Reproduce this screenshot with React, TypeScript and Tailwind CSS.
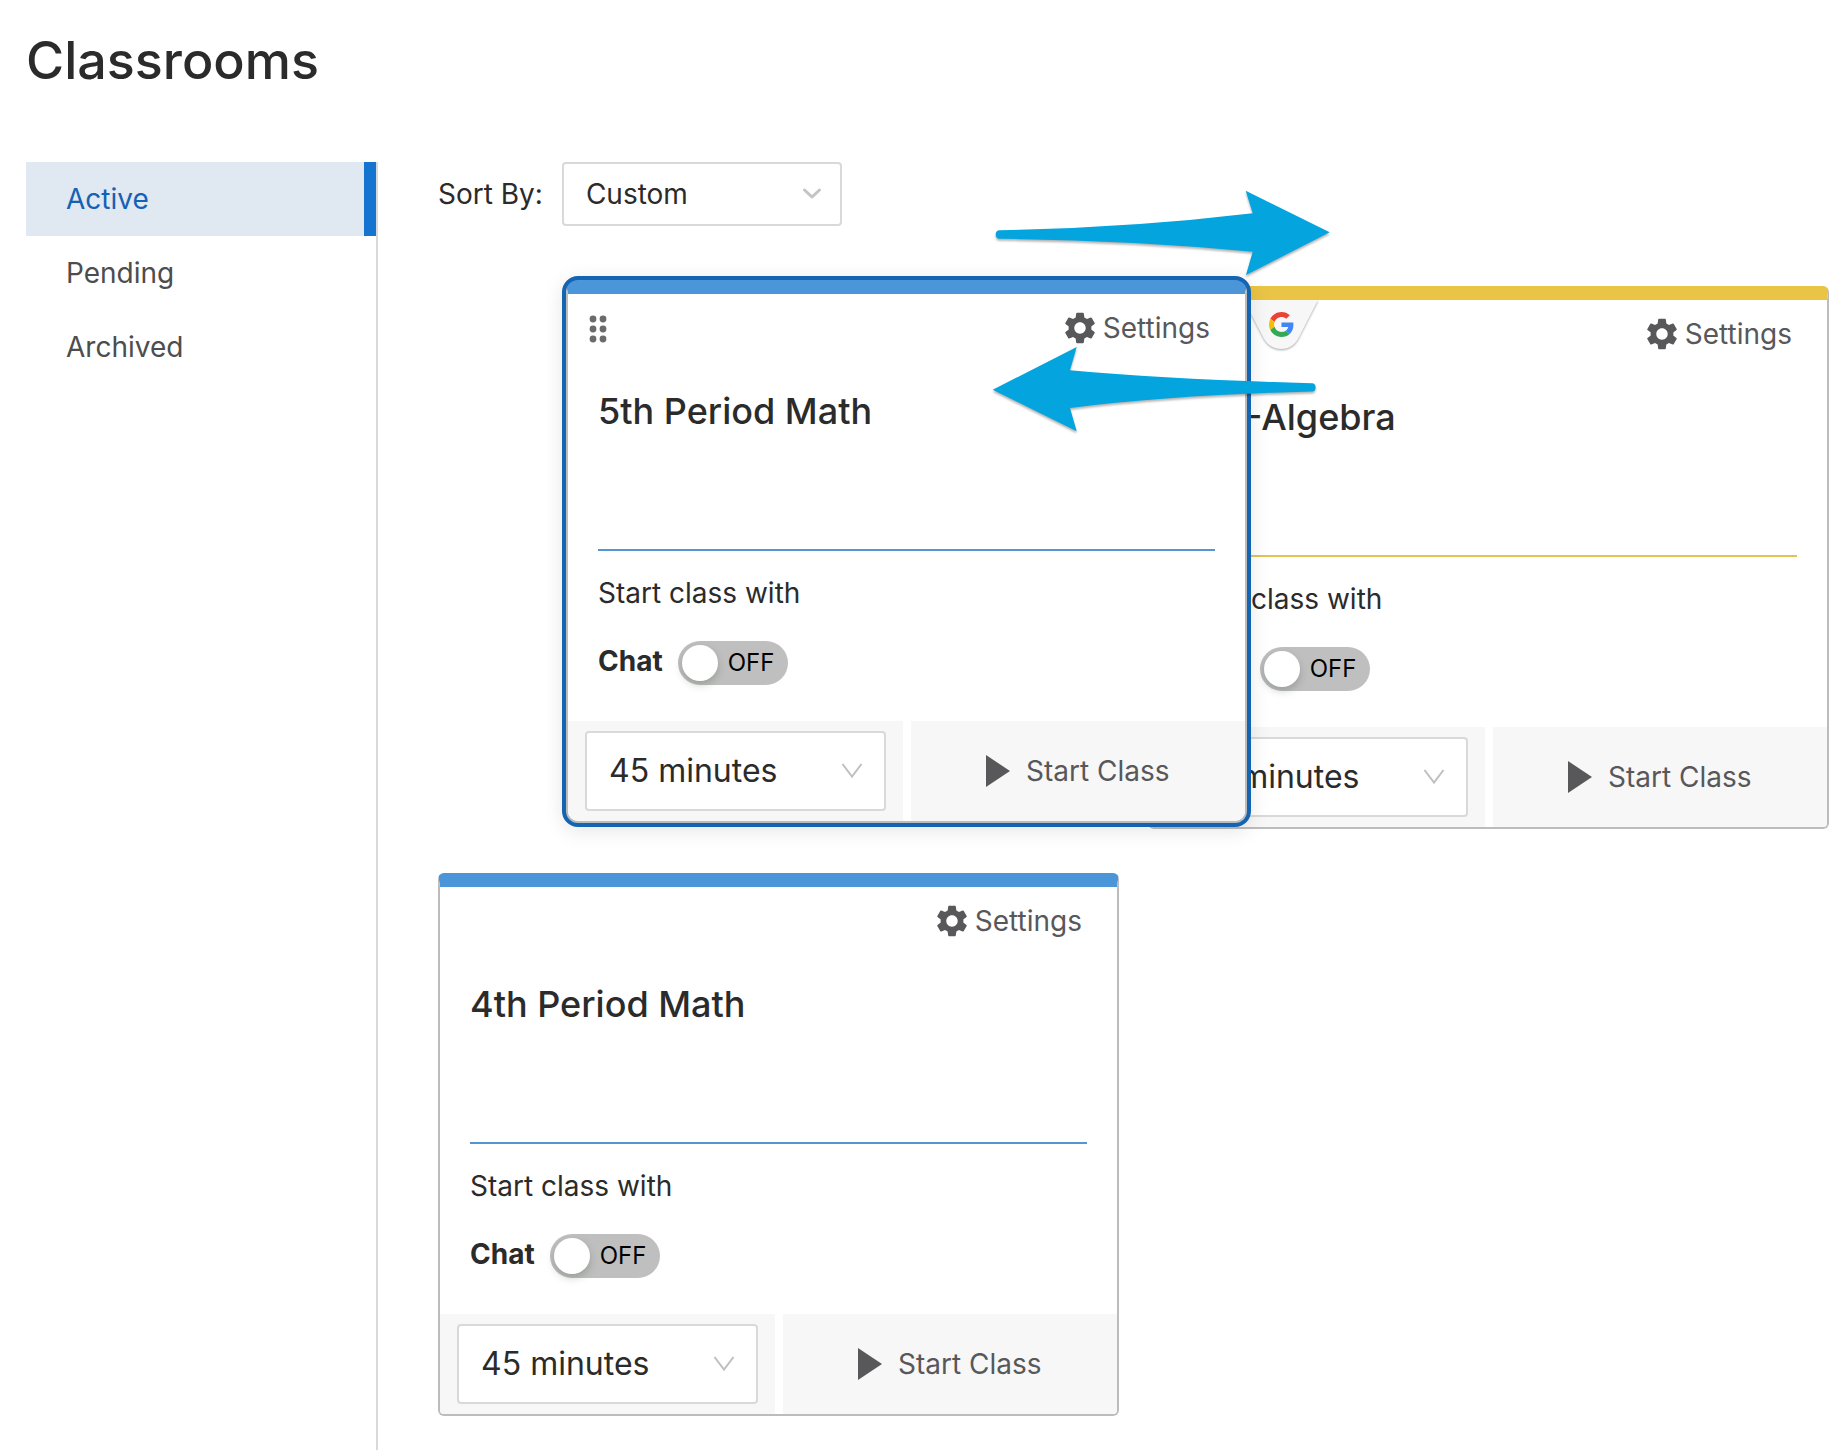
import { useState } from 'react';
import { MdSettings } from 'react-icons/md';
import { clsx } from 'clsx';

// =============================================================================
// Types
// =============================================================================

interface Classroom {
  id: string;
  name: string;
  accent: 'blue' | 'yellow';
  google?: boolean;
  dragging?: boolean;
}

// =============================================================================
// Data
// =============================================================================

const NAV_ITEMS = ['Active', 'Pending', 'Archived'];

const CLASSROOMS: Classroom[] = [
  { id: 'math-5', name: '5th Period Math', accent: 'blue', dragging: true },
  { id: 'algebra', name: '5th -Algebra', accent: 'yellow', google: true },
  { id: 'math-4', name: '4th Period Math', accent: 'blue' },
];

const ACCENTS = {
  blue: { bar: 'border-t-[#4b96d9]', rule: 'border-b-[#5596d2]' },
  yellow: { bar: 'border-t-[#eac445]', rule: 'border-b-[#e2c355]' },
};

// =============================================================================
// Icons
// =============================================================================

function DragHandle() {
  return (
    <svg width="18" height="30" viewBox="0 0 18 30" fill="#6b6b6b" aria-hidden="true">
      {[6, 16, 26].map((y) => (
        <g key={y}>
          <circle cx="4" cy={y} r="3.4" />
          <circle cx="14" cy={y} r="3.4" />
        </g>
      ))}
    </svg>
  );
}

function GoogleTab() {
  return (
    <svg width="82" height="58" viewBox="0 0 82 58" aria-hidden="true">
      <path
        d="M4 0H78L60 35Q54 49 41 49Q28 49 22 35Z"
        fill="#f7f7f7"
        className="drop-shadow-[0_1px_1px_rgba(0,0,0,0.35)]"
      />
      <g transform="translate(29 12) scale(0.52)">
        <path fill="#EA4335" d="M24 9.5c3.54 0 6.71 1.22 9.21 3.6l6.85-6.85C35.9 2.38 30.47 0 24 0 14.62 0 6.51 5.38 2.56 13.22l7.98 6.19C12.43 13.72 17.74 9.5 24 9.5z" />
        <path fill="#4285F4" d="M46.98 24.55c0-1.57-.15-3.09-.38-4.55H24v9.02h12.94c-.58 2.96-2.26 5.48-4.78 7.18l7.73 6c4.51-4.18 7.09-10.36 7.09-17.65z" />
        <path fill="#FBBC05" d="M10.53 28.59c-.48-1.45-.76-2.99-.76-4.59s.27-3.14.76-4.59l-7.98-6.19C.92 16.46 0 20.12 0 24c0 3.88.92 7.54 2.56 10.78l7.97-6.19z" />
        <path fill="#34A853" d="M24 48c6.48 0 11.93-2.13 15.89-5.81l-7.73-6c-2.15 1.45-4.92 2.3-8.16 2.3-6.26 0-11.57-4.22-13.47-9.91l-7.98 6.19C6.51 42.62 14.62 48 24 48z" />
      </g>
    </svg>
  );
}

// Two arrows that show the cards trading places
function SwapArrows() {
  return (
    <svg
      width="350"
      height="256"
      viewBox="990 184 350 256"
      fill="#04a4de"
      aria-hidden="true"
      className="pointer-events-none absolute -top-[102px] left-[552px] z-20 drop-shadow-[0_2px_1px_rgba(0,0,0,0.3)]"
    >
      <path d="M999.5 230.3Q1130 228 1252.7 213.3L1245.7 190.7L1329.7 232.3L1246 275L1252.7 251.7Q1130 240 999.5 238.8Q995.7 238.5 995.7 234.5Q995.7 230.5 999.5 230.3Z" />
      <path d="M1312 383.3Q1173 379.5 1070 370.3L1076.7 347L992.7 389.7L1076.7 431.3L1070 408Q1173 395 1312 391.5Q1315.6 391.2 1315.6 387.4Q1315.6 383.5 1312 383.3Z" />
    </svg>
  );
}

// =============================================================================
// Component: ClassroomCard
// =============================================================================

function ClassroomCard({ classroom }: { classroom: Classroom }) {
  const [chat, setChat] = useState(false);
  const accent = ACCENTS[classroom.accent];

  return (
    <article
      className={clsx(
        'relative overflow-hidden border-2 border-t-[14px] border-[#bcbcbc] bg-white',
        classroom.dragging ? 'rounded-xl' : 'rounded-md',
        accent.bar
      )}
    >
      {classroom.google && (
        <div className="absolute top-0 left-[90px]">
          <GoogleTab />
        </div>
      )}

      <div className="flex h-17 items-center pr-[35px] pl-[21px]">
        {classroom.dragging && (
          <button type="button" aria-label="Move classroom" className="cursor-grab">
            <DragHandle />
          </button>
        )}
        <button type="button" className="ml-auto flex items-center gap-1 text-[28px] text-[#58585a]">
          <MdSettings className="size-[38px]" />
          Settings
        </button>
      </div>

      <div className="mx-[30px]">
        <div className={clsx('h-[189px] border-b-2 pt-[25px]', accent.rule)}>
          <h2 className="text-4xl leading-12 font-medium">{classroom.name}</h2>
        </div>
        <p className="mt-5 text-[28px] leading-11">Start class with</p>
        <label className="mt-[26px] mb-9 flex w-fit items-center gap-[15px] text-[28px] leading-10 font-bold">
          <span className="pb-1">Chat</span>
          <span className="relative flex h-11 w-[110px] items-center rounded-full bg-[#bfbfbf] p-1 has-checked:flex-row-reverse has-checked:bg-[#1574d0]">
            <input
              type="checkbox"
              role="switch"
              checked={chat}
              onChange={(e) => setChat(e.target.checked)}
              className="absolute inset-0 size-full cursor-pointer opacity-0"
            />
            <span className="size-9 rounded-full bg-white shadow-[0_4px_8px_rgba(0,35,11,0.2)]" />
            <span className="flex-1 pl-[10px] text-2xl font-normal text-black">{chat ? 'ON' : 'OFF'}</span>
          </span>
        </label>
      </div>

      <div className="grid h-25 grid-cols-2 gap-2">
        <div className="bg-[#f7f7f7] px-[17px] py-[10px]">
          <div className="relative h-full">
            <select
              aria-label="Class length"
              className="size-full appearance-none rounded-sm border-2 border-[#d9d9d9] bg-white pl-[22px] text-[32px]"
            >
              <option>45 minutes</option>
              <option>60 minutes</option>
              <option>90 minutes</option>
            </select>
            <svg
              width="22"
              height="16"
              viewBox="0 0 22 16"
              fill="none"
              stroke="#bfbfbf"
              strokeWidth="2"
              aria-hidden="true"
              className="pointer-events-none absolute top-8 right-[23px]"
            >
              <path d="M1.5 1L11 13.5L20.5 1" />
            </svg>
          </div>
        </div>
        <button
          type="button"
          className="flex items-center justify-center gap-4 bg-[#f7f7f7] text-[28px] text-[#58585a]"
        >
          <svg width="24" height="32" viewBox="0 0 24 32" fill="currentColor" aria-hidden="true">
            <path d="M0 0L24 16L0 32Z" />
          </svg>
          Start Class
        </button>
      </div>
    </article>
  );
}

// =============================================================================
// Page
// =============================================================================

export default function App() {
  return (
    <div className="flex min-h-screen flex-col overflow-x-hidden bg-white pl-[26px] font-['Inter',sans-serif] text-[#2b2b2b]">
      <h1 className="mt-[29px] mb-[69px] text-[52px] leading-16 font-medium">Classrooms</h1>

      <div className="flex flex-1">
        <nav className="w-[352px] shrink-0 border-r-2 border-[#d9d9d9]">
          {NAV_ITEMS.map((item, i) => (
            <a
              key={item}
              href={`#${item.toLowerCase()}`}
              aria-current={i === 0 ? 'page' : undefined}
              className={clsx(
                'flex h-[74px] items-center pl-10 text-[28px]',
                i === 0 ? 'border-r-12 border-[#1574d0] bg-[#e0e8f1] text-[#1561b5]' : 'text-[#4d4d4d]'
              )}
            >
              {item}
            </a>
          ))}
        </nav>

        <main className="min-w-0 flex-1 pr-[11px] pb-8 pl-15">
          <div className="mb-15 flex items-center gap-[19px]">
            <label htmlFor="sort-by" className="text-[28px]">
              Sort By:
            </label>
            <div className="relative h-16 w-70">
              <select
                id="sort-by"
                className="size-full appearance-none rounded-sm border-2 border-[#d9d9d9] bg-white pl-[22px] text-[28px]"
              >
                <option>Custom</option>
                <option>Name</option>
              </select>
              <svg
                width="20"
                height="14"
                viewBox="0 0 20 14"
                fill="none"
                stroke="#c4c4c4"
                strokeWidth="3"
                strokeLinecap="round"
                strokeLinejoin="round"
                aria-hidden="true"
                className="pointer-events-none absolute top-[25px] right-5"
              >
                <path d="M2.5 3L10 10L17.5 3" />
              </svg>
            </div>
          </div>

          <div className="relative grid grid-cols-2 gap-x-[29px] gap-y-11">
            {CLASSROOMS.map((classroom) =>
              classroom.dragging ? (
                <div key={classroom.id} className="relative z-10">
                  <div className="absolute -top-[10px] left-[124px] w-[calc(100%+8px)] rounded-2xl border-4 border-[#1464b4] bg-[#1464b4] shadow-[0_4px_20px_rgba(0,0,0,0.1)]">
                    <ClassroomCard classroom={classroom} />
                  </div>
                </div>
              ) : (
                <ClassroomCard key={classroom.id} classroom={classroom} />
              )
            )}
            <SwapArrows />
          </div>
        </main>
      </div>
    </div>
  );
}
